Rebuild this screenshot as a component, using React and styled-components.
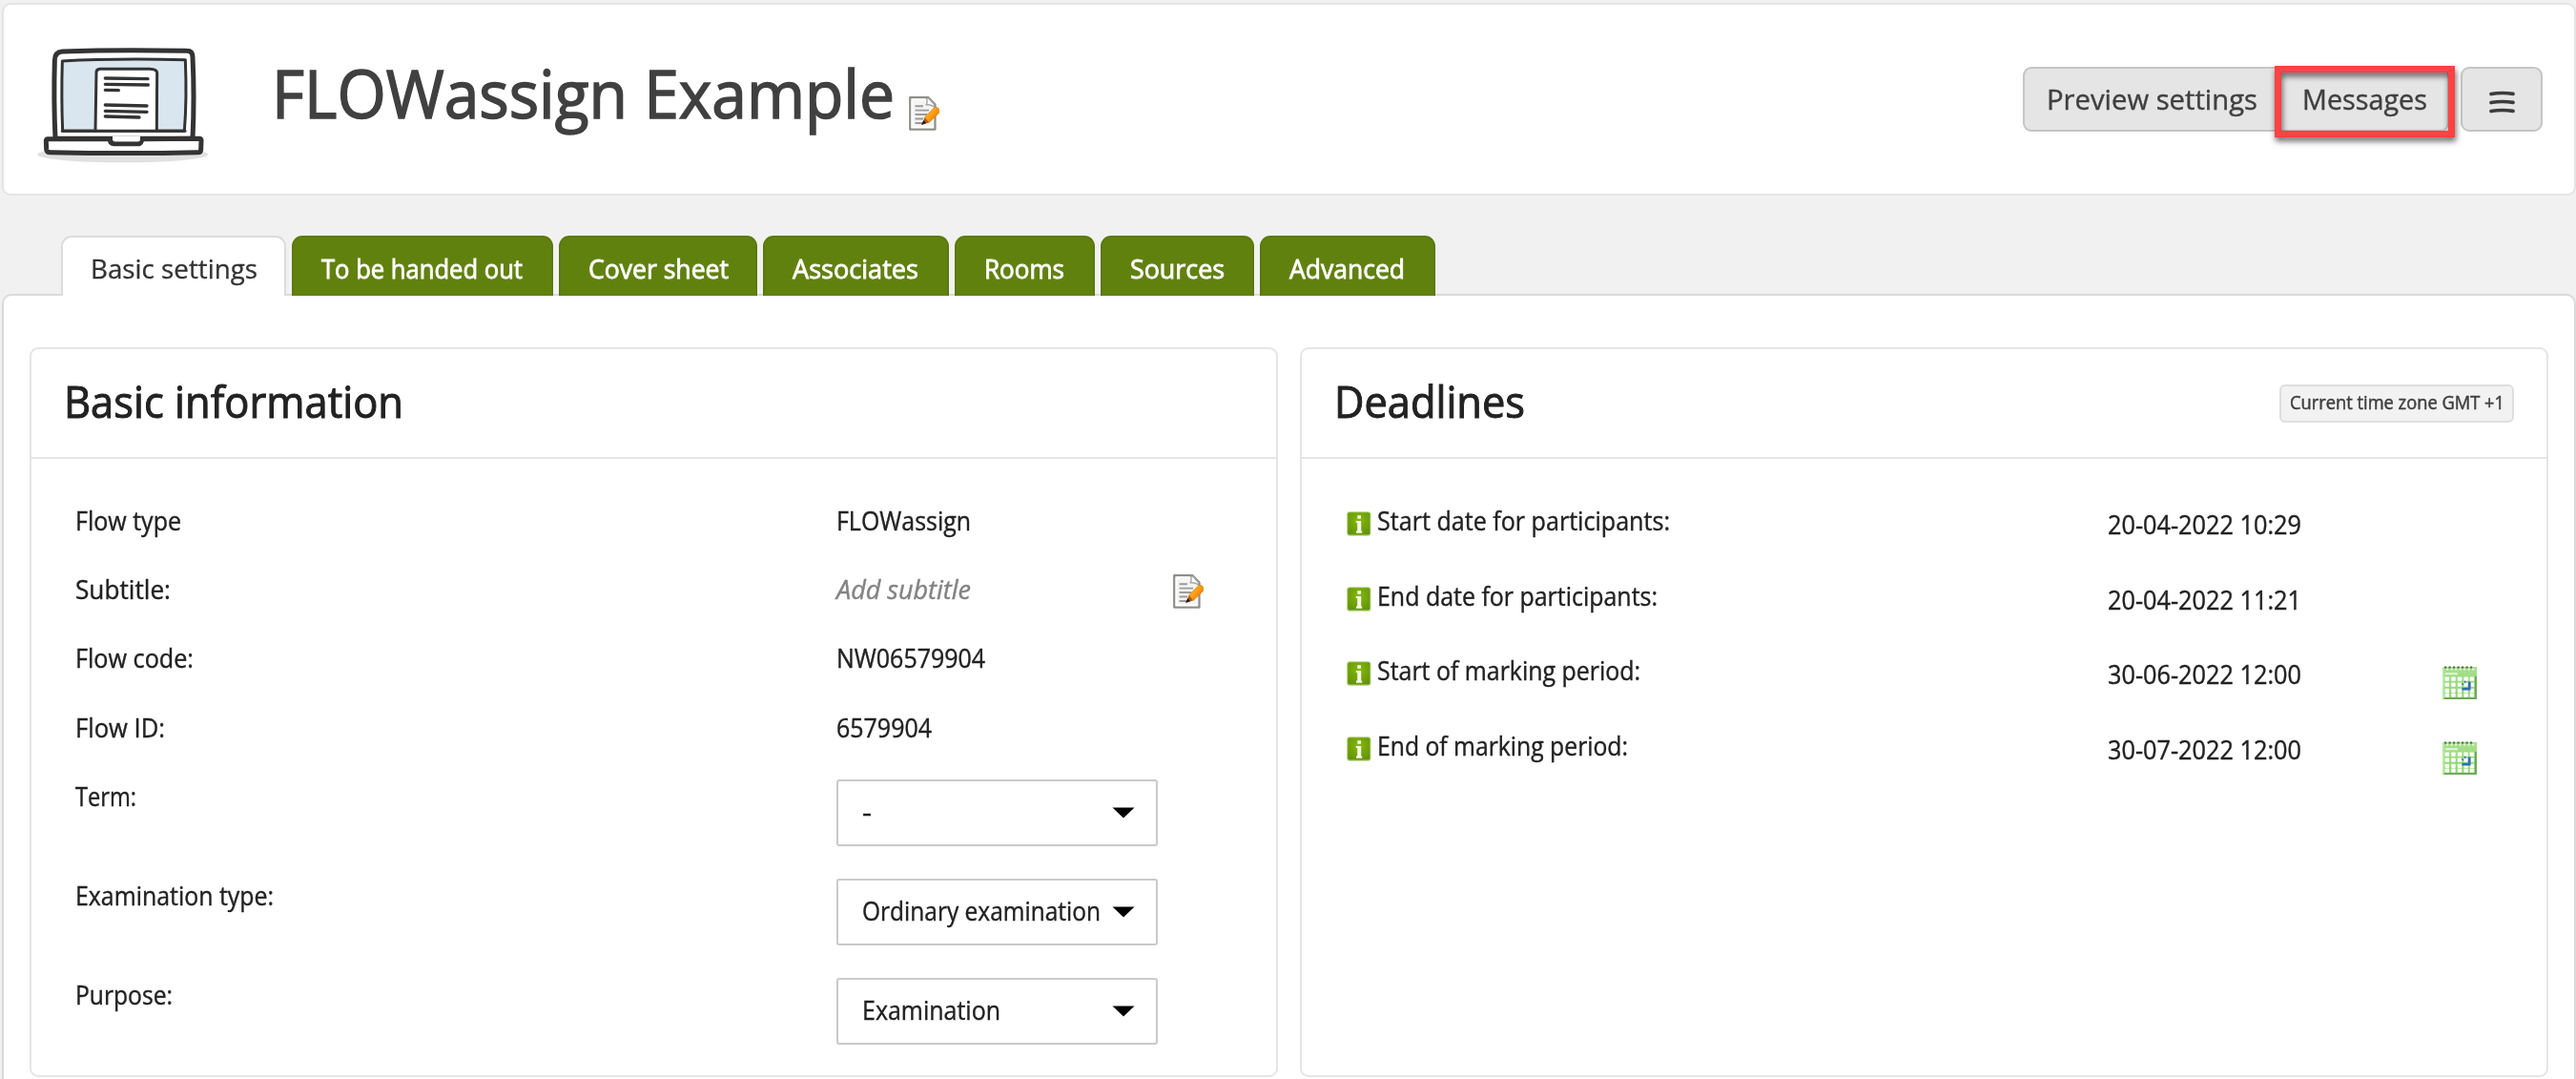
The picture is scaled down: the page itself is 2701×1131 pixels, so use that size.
import React, { useLayoutEffect, useRef, useState } from "react";
import styled, { createGlobalStyle, css } from "styled-components";

const Global = createGlobalStyle`
  * { box-sizing: border-box; }
  html, body { margin: 0; background: #f1f1f1; overflow: hidden; }
  body {
    font-family: "Open Sans", "Noto Sans", sans-serif;
    color: #222;
    font-size: 27px;
    line-height: 36px;
    -webkit-text-stroke: 0.4px currentColor;
  }
  h1, h2 { margin: 0; font-weight: 400; }
  svg { display: block; flex: none; }
`;

/* Condensed text: squeezes a line of text to the given width */
const CondensedBox = styled.span`
  display: block;
  flex: none;
  white-space: nowrap;
`;
const CondensedText = styled.span`
  display: inline-block;
  transform-origin: 0 50%;
`;
function Condensed({ width, children }) {
  const ref = useRef(null);
  const [scale, setScale] = useState(1);
  useLayoutEffect(() => {
    const natural = parseFloat(getComputedStyle(ref.current).width);
    if (natural) setScale(width / natural);
  }, [width, children]);
  return (
    <CondensedBox style={{ width }}>
      <CondensedText ref={ref} style={{ transform: `scaleX(${scale})` }}>
        {children}
      </CondensedText>
    </CondensedBox>
  );
}

const Page = styled.div`
  width: 2701px;
  height: 1131px;
  padding: 3px 0 0 2px;
  overflow: hidden;
  display: flex;
  flex-direction: column;
`;

const Header = styled.header`
  display: flex;
  align-items: flex-start;
  height: 202px;
  flex: none;
  padding: 41px 33px 0 34px;
  background: #fff;
  border: 2px solid #e4e4e4;
  border-radius: 9px;
`;
const Title = styled.h1`
  display: flex;
  flex: 1;
  margin-left: 65px;
  font-size: 69px;
  line-height: 90px;
  -webkit-text-stroke-width: 1.5px;
  color: #404040;
  svg { margin: 55px 0 0 15px; }
  > span { margin-top: 6px; }
`;
const Actions = styled.div`
  display: flex;
  margin-top: 24px;
`;
const button = css`
  display: flex;
  height: 68px;
  background: #e5e5e5;
  border: 2px solid #c5c5c5;
  font-size: 30px;
  line-height: 63px;
  color: #404040;
`;
const PreviewButton = styled.div`
  ${button}
  width: 267px;
  padding: 0 0 0 23px;
  border-right: 0;
  border-radius: 9px 0 0 9px;
`;
const MessagesButton = styled.div`
  ${button}
  position: relative;
  width: 180px;
  padding-left: 26px;
  border-left: 0;
  border-radius: 0 9px 9px 0;
`;
const Highlight = styled.div`
  position: absolute;
  left: -3px;
  top: -3px;
  width: 189px;
  height: 75px;
  border: 7px solid #ff4242;
  filter: drop-shadow(1px 4px 3px rgba(0, 0, 0, 0.6));
`;
const MenuButton = styled.div`
  ${button}
  width: 86px;
  margin-left: 12px;
  padding: 22px 0 0 28px;
  border-radius: 9px;
`;

const Tabs = styled.nav`
  display: flex;
  gap: 6px;
  height: 63px;
  flex: none;
  margin: 42px 0 -2px 62px;
  position: relative;
`;
const Tab = styled.div`
  width: ${(p) => p.$w}px;
  padding: 15px 0 0 29px;
  border: 2px solid #5a790c;
  border-bottom: 0;
  border-radius: 11px 11px 0 0;
  background: #61810f;
  color: #fff;
  font-size: 27.5px;
  -webkit-text-stroke-width: 0.8px;
  ${(p) =>
    p.$active &&
    css`
      background: #fff;
      border-color: #dcdcdc;
      color: #333;
      -webkit-text-stroke-width: 0.3px;
    `}
`;

const Panel = styled.main`
  display: flex;
  gap: 23px;
  align-items: flex-start;
  height: 860px;
  flex: none;
  padding: 54px 27px 0;
  background: #fff;
  border: 2px solid #dadada;
  border-radius: 10px;
`;
const Card = styled.section`
  flex: 1;
  height: 765px;
  border: 2px solid #e5e5e5;
  border-radius: 9px;
`;
const CardHead = styled.div`
  display: flex;
  justify-content: space-between;
  height: 115px;
  padding: 24px 34px 0 34px;
  border-bottom: 2px solid #e5e5e5;
  h2 {
    font-size: 45px;
    line-height: 61px;
    -webkit-text-stroke-width: 1px;
  }
`;
const Badge = styled.div`
  display: flex;
  justify-content: center;
  width: 246px;
  height: 40px;
  margin-top: 13px;
  border: 2px solid #dedede;
  border-radius: 6px;
  background: #f2f2f2;
  font-size: 19.5px;
  -webkit-text-stroke-width: 0.5px;
  line-height: 33px;
  color: #404040;
`;
const Rows = styled.div`
  padding: 47px 0 0 46px;
`;
const Row = styled.div`
  display: grid;
  grid-template-columns: 798px 353px auto;
  align-items: start;
  height: ${(p) => (p.$tall ? 104 : 72.2)}px;
`;
const Hint = styled.div`
  color: #838383;
  font-style: italic;
`;
const SelectBox = styled.div`
  display: flex;
  justify-content: space-between;
  width: 337px;
  height: 70px;
  padding: 14px 22px 0 25px;
  border: 2px solid #cacaca;
  border-radius: 3px;
  svg { margin-top: 13px; }
`;
const DateRow = styled.div`
  display: grid;
  grid-template-columns: 32px 766px 351px auto;
  align-items: start;
  height: 78.7px;
  margin-left: 1px;
  > svg:first-child { margin-top: 8px; }
`;
const DateValue = styled.div`
  padding-top: 4px;
`;
const IconSlot = styled.div`
  padding-top: ${(p) => p.$top}px;
`;

const Laptop = () => (
  <svg width="182" height="128" viewBox="114 138 546 384" fill="none" strokeLinejoin="round" strokeLinecap="round">
    <ellipse cx="386" cy="486" rx="268" ry="25" fill="#e0e0e0" />
    <path d="M174 436 C170 350 170 260 172 190 Q172 164 196 162 C320 157 460 157 588 160 Q606 160 606 180 C610 260 610 350 606 436 Z" fill="#fff" stroke="#333" strokeWidth="15" />
    <path d="M196 192 C320 185 450 185 583 188 C586 260 586 340 580 412 L197 412 C194 340 194 260 196 192 Z" fill="#dae6ef" stroke="#333" strokeWidth="9" />
    <path d="M300 410 L303 228 Q303 218 314 217 L470 217 Q494 218 494 229 L493 410" fill="#fff" stroke="#333" strokeWidth="9" strokeLinecap="butt" />
    <path d="M196 412 H582" stroke="#333" strokeWidth="9" />
    <path d="M331 246 L465 248 M331 265 L466 267 M331 283 L373 284 M331 330 L462 333 M331 349 L462 352 M331 366 L438 369" stroke="#333" strokeWidth="10" />
    <path d="M150 437 L346 437 Q344 451 358 452 L438 452 Q446 448 446 437 L628 436 Q634 436 633 444 L632 470 Q632 479 622 479 C460 483 300 482 158 479 Q147 479 146 470 L145 444 Q145 437 150 437 Z" fill="#fff" stroke="#333" strokeWidth="15" />
    <path d="M354 428 H441 V440 Q440 445 434 445 H362 Q356 445 354 439 Z" fill="#fff" />
  </svg>
);

const EditIcon = () => (
  <svg width="32" height="36" viewBox="0 0 32 36">
    <defs>
      <linearGradient id="pencil" x1="0" y1="0" x2="1" y2="1">
        <stop offset="0" stopColor="#ffc850" />
        <stop offset="0.5" stopColor="#ff9c10" />
        <stop offset="1" stopColor="#d86a00" />
      </linearGradient>
    </defs>
    <path d="M1.2 1.2 H20.5 L27.5 8.5 V34.6 H1.2 Z" fill="#f4f4f4" stroke="#8e8e88" strokeWidth="2.2" strokeLinejoin="round" />
    <path d="M3.4 3.4 H19 M3.4 3.4 V32.4 H25.4" fill="none" stroke="#fff" strokeWidth="1.6" />
    <path d="M18.5 2.5 Q20 7 17.8 9 Q22 8 26.5 11 V8.5 L20.5 2 Z" fill="#fff" stroke="#a8a8a8" strokeWidth="1.4" />
    <path d="M6.5 10.2 H15 M6.5 14.6 H21 M6.5 19 H19 M6.5 23.5 H15 M6.5 28 H14" stroke="#9b9b9b" strokeWidth="1.9" />
    <path d="M16.5 22 L27 11.5 Q29 10.4 31.4 13 V17.5 L21 27.5 Z" fill="url(#pencil)" stroke="#d97c08" strokeWidth="0.8" />
    <path d="M16.5 22 L21 27.5 L14 29.6 Z" fill="#a85b12" />
    <path d="M15.3 25 L18 28.2 L13 30 Z" fill="#29160c" />
  </svg>
);

const InfoIcon = () => (
  <svg width="26" height="26" viewBox="0 0 26 26">
    <defs>
      <radialGradient id="info" cx="0.5" cy="0.35" r="0.75">
        <stop offset="0" stopColor="#86b80e" />
        <stop offset="1" stopColor="#5f9104" />
      </radialGradient>
    </defs>
    <rect x="0.2" y="0.2" width="25.2" height="25.6" rx="3" fill="#b5ce84" />
    <rect x="1.2" y="1.2" width="23.2" height="23.4" rx="2" fill="url(#info)" />
    <path d="M11.3 4.3 H15 V7.8 H11.3 Z M9.8 10 H15.2 V20.5 H16.2 V22.8 H10 V20.5 H11.2 V12 H9.8 Z" fill="#f5faea" />
  </svg>
);

const CalendarIcon = () => (
  <svg width="36" height="35" viewBox="0 0 36 35">
    <defs>
      <linearGradient id="cal" x1="0" y1="0" x2="0" y2="1">
        <stop offset="0" stopColor="#a9e08c" />
        <stop offset="1" stopColor="#8ed672" />
      </linearGradient>
    </defs>
    <rect y="1" width="36" height="34" fill="url(#cal)" />
    <path d="M1 1 V34" stroke="#b4ecA0" strokeWidth="2" />
    <path d="M2 34 H35 V11" fill="none" stroke="#72a85c" strokeWidth="2.2" />
    <path d="M2 1.4 H33" stroke="#4c6a42" strokeWidth="2" strokeDasharray="2.2 2.3" />
    <path d="M4 3.6 H35" stroke="#e9f8e2" strokeWidth="1.8" strokeDasharray="2.2 2.3" />
    <path d="M3 8.2 H16" stroke="#e2f7d8" strokeWidth="2" />
    {[11.5, 17.6, 23.7, 28.6].map((y) =>
      [2.6, 9.2, 15.8, 22.4, 28.6].map((x) => (
        <rect key={`${x}-${y}`} x={x} y={y} width="4.5" height="4.2" rx="0.8" fill="#fcfffb" />
      ))
    )}
    <path d="M28.2 16.5 V24.2 H20.5" fill="none" stroke="#2d6fb0" strokeWidth="2.8" />
    <path d="M20.5 19.8 L21.8 18.5 M23 17.5 L24.5 16.2" stroke="#3f80b8" strokeWidth="2.2" />
  </svg>
);

const MenuIcon = () => (
  <svg width="27" height="26" viewBox="0 0 27 26" fill="none" stroke="#3c3c3c" strokeWidth="3.6" strokeLinecap="round">
    <path d="M2 4.6 Q13 2.6 25 4.4 M2 13.6 Q13 11.6 25 13.4 M2 22.6 Q13 20.6 25 22.4" />
  </svg>
);

const Caret = () => (
  <svg width="24" height="12" viewBox="0 0 24 12">
    <path d="M0.5 0.5 H23.5 L12 11.5 Z" fill="#000" />
  </svg>
);

const Select = ({ children }) => (
  <SelectBox>
    {children}
    <Caret />
  </SelectBox>
);

const tabs = [
  ["Basic settings", 236, 175],
  ["To be handed out", 274, 211],
  ["Cover sheet", 208, 147],
  ["Associates", 195, 132],
  ["Rooms", 147, 84],
  ["Sources", 161, 99],
  ["Advanced", 184, 121],
];

const deadlines = [
  ["Start date for participants:", 307, "20-04-2022 10:29", false],
  ["End date for participants:", 294, "20-04-2022 11:21", false],
  ["Start of marking period:", 276, "30-06-2022 12:00", true],
  ["End of marking period:", 263, "30-07-2022 12:00", true],
];

export default function App() {
  return (
    <Page>
      <Global />
      <Header>
        <Laptop />
        <Title>
          <Condensed width={653}>FLOWassign Example</Condensed>
          <EditIcon />
        </Title>
        <Actions>
          <PreviewButton>
            <Condensed width={221}>Preview settings</Condensed>
          </PreviewButton>
          <MessagesButton>
            <Condensed width={131}>Messages</Condensed>
            <Highlight />
          </MessagesButton>
          <MenuButton>
            <MenuIcon />
          </MenuButton>
        </Actions>
      </Header>

      <Tabs>
        {tabs.map(([label, w, textWidth], i) => (
          <Tab key={label} $w={w} $active={i === 0}>
            <Condensed width={textWidth}>{label}</Condensed>
          </Tab>
        ))}
      </Tabs>

      <Panel>
        <Card>
          <CardHead>
            <h2><Condensed width={356}>Basic information</Condensed></h2>
          </CardHead>
          <Rows>
            <Row>
              <Condensed width={111}>Flow type</Condensed>
              <Condensed width={141}>FLOWassign</Condensed>
            </Row>
            <Row>
              <Condensed width={100}>Subtitle:</Condensed>
              <Hint><Condensed width={141}>Add subtitle</Condensed></Hint>
              <IconSlot $top={2}><EditIcon /></IconSlot>
            </Row>
            <Row>
              <Condensed width={124}>Flow code:</Condensed>
              <Condensed width={156}>NW06579904</Condensed>
            </Row>
            <Row>
              <Condensed width={94}>Flow ID:</Condensed>
              <Condensed width={100}>6579904</Condensed>
            </Row>
            <Row $tall>
              <Condensed width={64}>Term:</Condensed>
              <Select><Condensed width={10}>-</Condensed></Select>
            </Row>
            <Row $tall>
              <Condensed width={208}>Examination type:</Condensed>
              <Select><Condensed width={250}>Ordinary examination</Condensed></Select>
            </Row>
            <Row $tall>
              <Condensed width={102}>Purpose:</Condensed>
              <Select><Condensed width={145}>Examination</Condensed></Select>
            </Row>
          </Rows>
        </Card>

        <Card>
          <CardHead>
            <h2><Condensed width={200}>Deadlines</Condensed></h2>
            <Badge><Condensed width={225}>Current time zone GMT +1</Condensed></Badge>
          </CardHead>
          <Rows>
            {deadlines.map(([label, w, date, editable]) => (
              <DateRow key={label}>
                <InfoIcon />
                <Condensed width={w}>{label}</Condensed>
                <DateValue><Condensed width={203}>{date}</Condensed></DateValue>
                {editable && <IconSlot $top={13}><CalendarIcon /></IconSlot>}
              </DateRow>
            ))}
          </Rows>
        </Card>
      </Panel>
    </Page>
  );
}
